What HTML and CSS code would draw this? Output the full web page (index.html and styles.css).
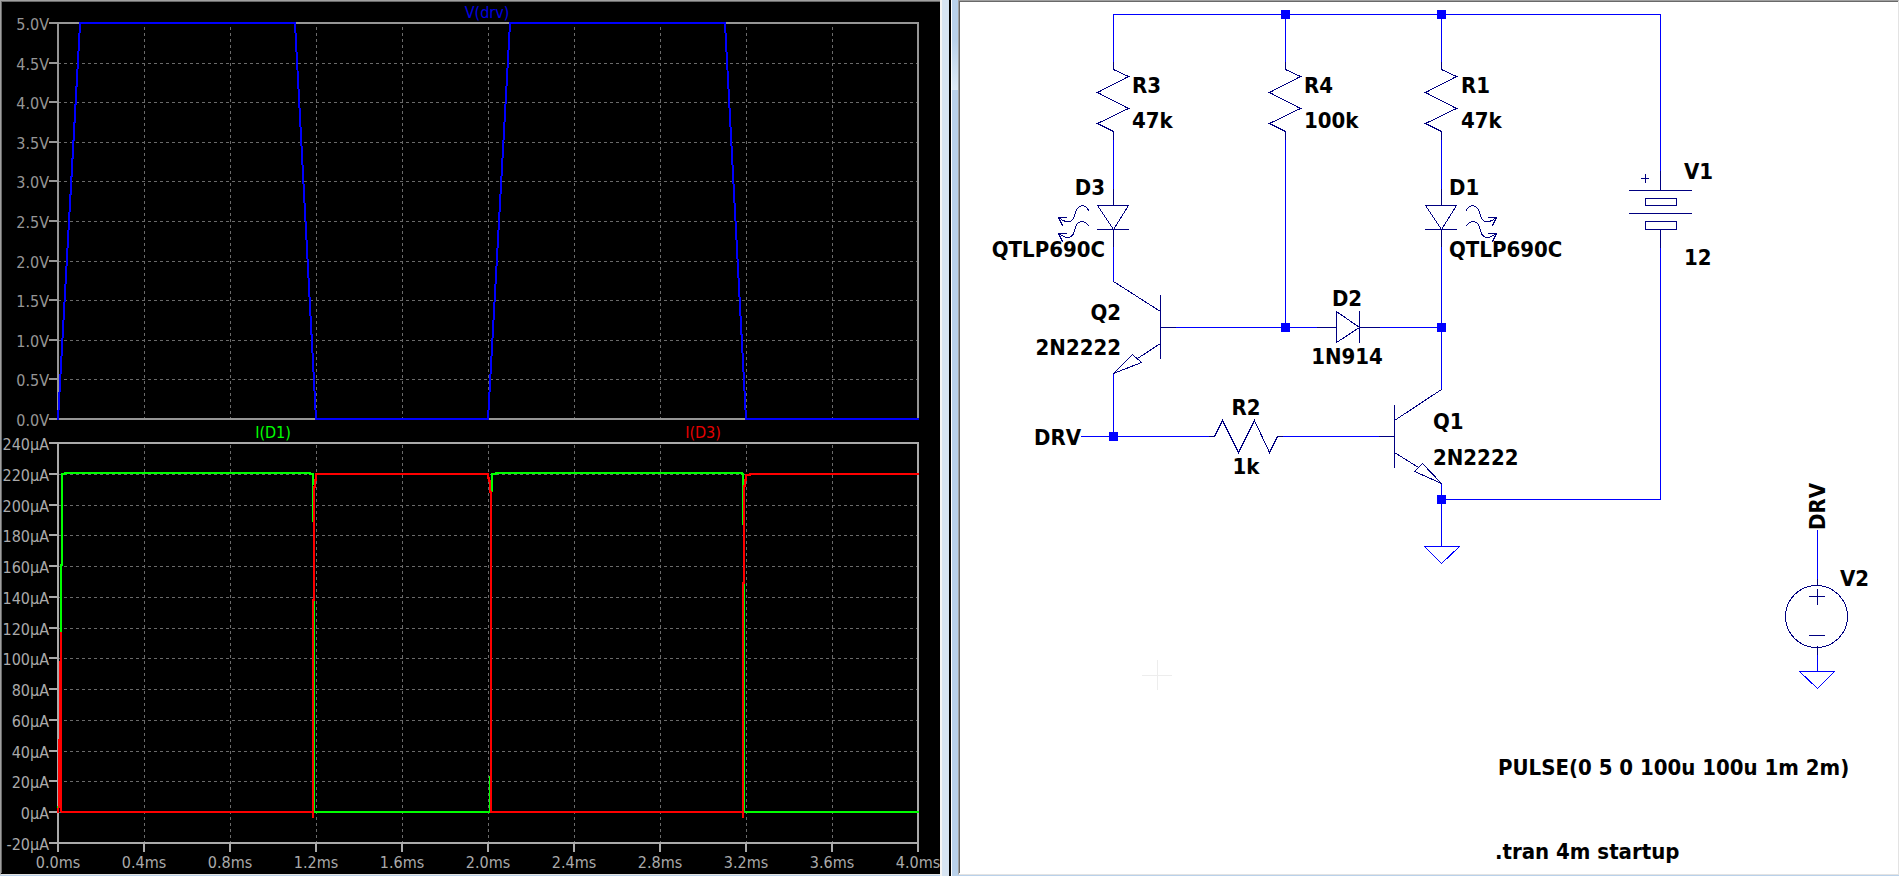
FILE: index.html
```
<!DOCTYPE html>
<html lang="en">
<head>
<meta charset="utf-8">
<title>LED flasher simulation</title>
<link rel="stylesheet" href="styles.css">
</head>
<body>
<main class="workspace">
<section class="pane pane-plot" aria-label="Waveforms">
<svg class="view" viewBox="2 2 938 871">
<g class="grid">
<path d="M58 63.5H917M58 102.5H917M58 142.5H917M58 181.5H917M58 221.5H917M58 261.5H917M58 300.5H917M58 340.5H917M58 379.5H917"/>
<path d="M144.5 27V418M230.5 27V418M316.5 27V418M402.5 27V418M488.5 27V418M574.5 27V418M660.5 27V418M746.5 27V418M832.5 27V418"/>
<path d="M58 474.5H917M58 505.5H917M58 535.5H917M58 566.5H917M58 597.5H917M58 628.5H917M58 658.5H917M58 689.5H917M58 720.5H917M58 751.5H917M58 781.5H917M58 812.5H917"/>
<path d="M144.5 445V842M230.5 445V842M316.5 445V842M402.5 445V842M488.5 445V842M574.5 445V842M660.5 445V842M746.5 445V842M832.5 445V842"/>
</g>
<g class="axis axis-voltage">
<rect x="58" y="23" width="860" height="396"/>
<path d="M49 23H58M49 63H58M49 102H58M49 142H58M49 181H58M49 221H58M49 261H58M49 300H58M49 340H58M49 379H58M49 419H58"/>
</g>
<g class="axis axis-current">
<rect x="58" y="443" width="860" height="400"/>
<path d="M49 443H58M49 474H58M49 505H58M49 535H58M49 566H58M49 597H58M49 628H58M49 658H58M49 689H58M49 720H58M49 751H58M49 781H58M49 812H58M49 843H58"/>
<path d="M58 843V852M144 843V852M230 843V852M316 843V852M402 843V852M488 843V852M574 843V852M660 843V852M746 843V852M832 843V852M918 843V852"/>
</g>
<g class="ticks ticks-y ticks-voltage">
<text x="49" y="30">5.0V</text><text x="49" y="70">4.5V</text><text x="49" y="109">4.0V</text><text x="49" y="149">3.5V</text><text x="49" y="188">3.0V</text><text x="49" y="228">2.5V</text><text x="49" y="268">2.0V</text><text x="49" y="307">1.5V</text><text x="49" y="347">1.0V</text><text x="49" y="386">0.5V</text><text x="49" y="426">0.0V</text>
</g>
<g class="ticks ticks-y">
<text x="49" y="450">240µA</text><text x="49" y="481">220µA</text><text x="49" y="512">200µA</text><text x="49" y="542">180µA</text><text x="49" y="573">160µA</text><text x="49" y="604">140µA</text><text x="49" y="635">120µA</text><text x="49" y="665">100µA</text><text x="49" y="696">80µA</text><text x="49" y="727">60µA</text><text x="49" y="758">40µA</text><text x="49" y="788">20µA</text><text x="49" y="819">0µA</text><text x="49" y="850">-20µA</text>
</g>
<g class="ticks ticks-x">
<text x="58" y="868">0.0ms</text><text x="144" y="868">0.4ms</text><text x="230" y="868">0.8ms</text><text x="316" y="868">1.2ms</text><text x="402" y="868">1.6ms</text><text x="488" y="868">2.0ms</text><text x="574" y="868">2.4ms</text><text x="660" y="868">2.8ms</text><text x="746" y="868">3.2ms</text><text x="832" y="868">3.6ms</text><text x="918" y="868">4.0ms</text>
</g>
<g class="ticks ticks-x">
<text class="name-drv" x="487" y="18">V(drv)</text>
<text class="name-d1" x="273" y="438">I(D1)</text>
<text class="name-d3" x="703" y="438">I(D3)</text>
</g>
<path class="trace trace-drv" d="M58 420V419L80 24V23H295L316 419H488L510 23H725L746 419H919"/>
<path class="trace trace-d1" d="M58 812V806M61 812V565H62V474H65V473H310V474H313V485M314 812H490M492 492V474H496V473H742V474H743V485M745 812H919"/>
<path class="hair trace-d1" d="M312.500 480V521.500M314.500 600V812M489.500 776V812M742.500 480V525M744.500 583V812"/>
<path class="trace trace-d3" d="M58 813V808M59 808V739M60 808V661M61 812V632M62 811V812H313M313 818V600H314V487H315V480H316V474H488V478H489V481H490V492H491V812H743M743 818V583H744V486H745V480H746V475H750V474H919"/>
</svg>
</section>
<div class="splitter">
<div class="frame-left"></div>
<div class="frame-edge"></div>
<div class="frame-right"></div>
</div>
<section class="pane pane-schematic" aria-label="Schematic">
<svg class="view" viewBox="960 2 938 871">
<defs>
<path id="resistor" d="M0 -7V0L15 7L-16 23L15 39L-16 54L0 62V70"/>
<path id="diode" d="M0 -16V0M-16 0H15L0 24ZM-16 24H15M0 24V41"/>
<g id="rays">
<path d="M1088 210C1086 204 1080 204 1077 208C1073 212 1075 221 1068 221C1065 222 1062 220 1058 217M1066 217H1058L1062 225"/>
<path d="M1088 225C1086 221 1080 220 1077 223C1073 228 1075 236 1068 237C1065 237 1062 236 1058 233M1066 233H1058L1062 241"/>
</g>
<rect id="node" x="-4" y="-4" width="9" height="9"/>
</defs>
<path class="cursor" d="M1142 675.500H1172M1157.500 660V690"/>
<g class="wires" transform="translate(.5 .5)">
<path d="M1113 62V14H1660V171M1285 14V62M1441 14V62M1113 139V189M1285 139V327M1441 139V189M1113 246V281M1441 246V389M1660 247V499H1441M1175 327H1317M1379 327H1441M1113 373V436M1081 436H1209M1282 436H1379M1441 483V546M1424 546H1459L1441 563ZM1817 530V579M1817 654V671M1799 671H1834L1817 688Z"/>
</g>
<g class="parts" transform="translate(.5 .5)">
<use href="#resistor" x="1113" y="69"/>
<use href="#resistor" x="1285" y="69"/>
<use href="#resistor" x="1441" y="69"/>
<use href="#diode" x="1113" y="205"/>
<use href="#diode" x="1441" y="205"/>
<use href="#rays"/>
<use href="#rays" transform="translate(2554 0) scale(-1 1)"/>
<path d="M1113 281L1160 311M1160 295V358M1160 327H1175M1160 343L1137 358M1113 373L1132 354L1141 362Z"/>
<path d="M1317 327H1336M1336 311V342L1359 327ZM1359 311V342M1359 327H1379"/>
<path d="M1209 436H1214L1222 420L1238 452L1254 420L1269 452L1277 436H1282"/>
<path d="M1379 436H1394M1394 405V467M1394 420L1441 389M1394 452L1418 467M1441 483L1422 463L1414 471Z"/>
<path d="M1660 171V190M1629 190H1691M1645 198H1676V205H1645ZM1629 213H1691M1645 221H1676V229H1645ZM1660 229V247M1641 178H1648M1645 174V182"/>
<circle cx="1816" cy="616" r="31"/>
<path d="M1817 579V585M1809 596H1824M1817 589V604M1809 635H1824M1817 646V654"/>
</g>
<g class="nodes">
<use href="#node" x="1285" y="14"/><use href="#node" x="1441" y="14"/><use href="#node" x="1285" y="327"/><use href="#node" x="1441" y="327"/><use href="#node" x="1113" y="436"/><use href="#node" x="1441" y="499"/>
</g>
<g class="labels">
<text x="1132" y="93">R3</text><text x="1132" y="128">47k</text>
<text x="1304" y="93">R4</text><text x="1304" y="128">100k</text>
<text x="1461" y="93">R1</text><text x="1461" y="128">47k</text>
<text x="1449" y="195">D1</text><text x="1449" y="257">QTLP690C</text>
<text x="1684" y="179">V1</text><text x="1684" y="265">12</text>
<text x="1433" y="429">Q1</text><text x="1433" y="465">2N2222</text>
<text x="1840" y="586">V2</text>
<text x="1498" y="775">PULSE(0 5 0 100u 100u 1m 2m)</text>
<text x="1495" y="859">.tran 4m startup</text>
<text transform="translate(1825 530) rotate(-90)">DRV</text>
</g>
<g class="labels labels-end">
<text x="1105" y="195">D3</text><text x="1105" y="257">QTLP690C</text>
<text x="1121" y="320">Q2</text><text x="1121" y="355">2N2222</text>
<text x="1081" y="445">DRV</text>
</g>
<g class="labels labels-mid">
<text x="1347" y="306">D2</text><text x="1347" y="364">1N914</text>
<text x="1246" y="415">R2</text><text x="1246" y="474">1k</text>
</g>
</svg>
</section>
</main>
</body>
</html>
```
FILE: styles.css
```
* { box-sizing: border-box; }
body {
  margin: 0;
  background: #b9d1ea;
  font-family: "DejaVu Sans Condensed", "DejaVu Sans", sans-serif;
}
.workspace {
  display: grid;
  grid-template-columns: minmax(0, 940fr) 18px minmax(0, 941fr);
  min-height: 100vh;
}
.pane {
  margin-bottom: 1px;
  border-top: 1px solid #a0a0a0;
  border-left: 1px solid #a0a0a0;
  border-bottom: 1px solid #e3e3e3;
}
.pane-plot { background: #000; }
.pane-schematic { background: #fff; border-right: 1px solid #e3e3e3; }
.view {
  display: block;
  width: 100%;
  height: auto;
  border-top: 1px solid #696969;
  border-left: 1px solid #696969;
  shape-rendering: crispEdges;
}
.view path, .view circle, .axis rect { fill: none; }

.grid { stroke: #6a6a6a; stroke-width: 1; stroke-dasharray: 3 3; }
.axis { stroke-width: 2; }
.axis-voltage { stroke: #969696; }
.axis-current { stroke: #aaaaaa; }
.ticks { font-size: 16px; fill: #aaaaaa; }
.ticks-voltage { fill: #969696; }
.ticks-y { text-anchor: end; }
.ticks-x { text-anchor: middle; }
.name-drv { fill: #0000e6; }
.name-d1 { fill: #00ff00; }
.name-d3 { fill: #e60000; }
.trace { stroke-width: 2; }
.hair { stroke-width: 1; }
.trace-drv { stroke: #0000ff; }
.trace-d1 { stroke: #00ff00; }
.trace-d3 { stroke: #ff0000; }

.splitter { display: flex; }
.frame-left { width: 9px; background: #d7e4f2; border-left: 2px solid #f4f4f4; }
.frame-edge { width: 3px; background: #000; border-right: 1px solid #fff; }
.frame-right {
  flex: 1;
  background: linear-gradient(#b9d1ea 0, #b9d1ea 40px, #dfeaf6 90px, #b9d1ea 90px);
}

.cursor { stroke: #ededed; }
.wires, .parts { stroke-linecap: square; }
.wires { stroke: #0000ff; }
.parts { stroke: #000080; }
.nodes { fill: #0000ff; }
.labels { font-size: 22px; font-weight: bold; fill: #000; }
.labels-end { text-anchor: end; }
.labels-mid { text-anchor: middle; }
```
